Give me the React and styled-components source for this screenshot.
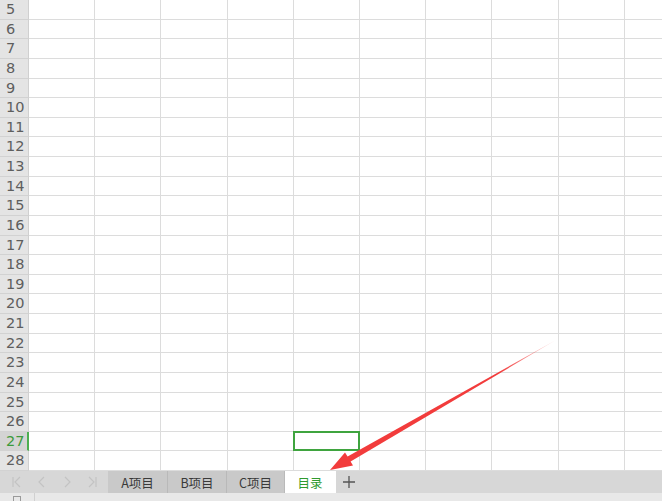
import React from 'react';
import styled, { createGlobalStyle } from 'styled-components';

const GlobalStyle = createGlobalStyle`
  html, body {
    margin: 0;
    padding: 0;
    overflow: hidden;
    background: #ffffff;
  }
`;

const Page = styled.div`
  position: relative;
  width: 662px;
  height: 501px;
  display: flex;
  flex-direction: column;
  font-family: "Noto Sans CJK SC", "Liberation Sans", sans-serif;
  overflow: hidden;
`;

const Sheet = styled.div`
  height: 471px;
  display: grid;
  grid-template-columns: 29px repeat(10, 66.2px);
  grid-template-rows: repeat(24, 1fr);
  overflow: hidden;
`;

const RowHead = styled.div`
  background: ${p => (p.$active ? '#d4d4d4' : '#e4e4e4')};
  color: ${p => (p.$active ? '#3c9a3c' : '#5e5e5e')};
  border-bottom: 1px solid #d2d2d2;
  border-right: ${p => (p.$active ? '2px solid #4caf50' : '1px solid #d0d0d0')};
  font-family: "DejaVu Sans", sans-serif;
  font-size: 14.5px;
  display: flex;
  align-items: center;
  padding-left: 6px;
  box-sizing: border-box;
  line-height: 1;
`;

const Cell = styled.div`
  position: relative;
  border-right: 1px solid #dcdcdc;
  border-bottom: 1px solid #dcdcdc;
  box-sizing: border-box;
  background: #fff;

  ${p => p.$selected && `
    &::after {
      content: '';
      position: absolute;
      inset: -1px -1px -1px -1px;
      border: 2px solid #3fa43f;
    }
  `}
`;

const TabBar = styled.div`
  height: 22px;
  background: #d7d7d7;
  display: flex;
  align-items: stretch;
`;

const Nav = styled.div`
  width: 108px;
  display: flex;
  align-items: center;
  justify-content: space-around;
  padding: 0 4px;
  box-sizing: border-box;
`;

const Tab = styled.div`
  width: ${p => p.$w}px;
  background: ${p => (p.$active ? '#ffffff' : '#c9c9c9')};
  color: ${p => (p.$active ? '#2f9a2f' : '#3a3a3a')};
  border-right: 1px solid ${p => (p.$active ? '#ffffff' : '#b9b9b9')};
  font-size: 12.5px;
  display: flex;
  align-items: center;
  justify-content: center;
  box-sizing: border-box;
`;

const AddTab = styled.div`
  width: 26px;
  display: flex;
  align-items: center;
  justify-content: center;
`;

const StatusBand = styled.div`
  height: 8px;
  background: #e8e8e8;
  display: flex;
`;

const StatusIcon = styled.div`
  width: 35px;
  border-right: 1px solid #d0d0d0;
  box-sizing: border-box;
  display: flex;
  justify-content: center;
  padding-top: 3px;

  &::before {
    content: '';
    width: 8px;
    height: 5px;
    border: 1px solid #9a9a9a;
    border-bottom: none;
    box-sizing: border-box;
  }
`;

const Overlay = styled.svg`
  position: absolute;
  left: 0;
  top: 0;
  pointer-events: none;
`;

const NavIcon = ({ d }) => (
  <svg width="12" height="14" viewBox="0 0 12 14">
    <path d={d} fill="none" stroke="#c3c3c3" strokeWidth="1.2" />
  </svg>
);

const rows = Array.from({ length: 24 }, (_, i) => i + 5);
const cols = Array.from({ length: 10 }, (_, i) => i);

const tabs = [
  { name: 'A项目', w: 60 },
  { name: 'B项目', w: 59 },
  { name: 'C项目', w: 58 },
  { name: '目录', w: 51, active: true },
];

export default function App() {
  return (
    <>
      <GlobalStyle />
      <Page>
        <Sheet>
          {rows.map(r => (
            <React.Fragment key={r}>
              <RowHead $active={r === 27}>{r}</RowHead>
              {cols.map(c => (
                <Cell key={c} $selected={r === 27 && c === 4} />
              ))}
            </React.Fragment>
          ))}
        </Sheet>
        <TabBar>
          <Nav>
            <NavIcon d="M2 2v10M9 2L4 7l5 5" />
            <NavIcon d="M8 2L3 7l5 5" />
            <NavIcon d="M4 2l5 5-5 5" />
            <NavIcon d="M3 2l5 5-5 5M10 2v10" />
          </Nav>
          {tabs.map(t => (
            <Tab key={t.name} $w={t.w} $active={t.active}>{t.name}</Tab>
          ))}
          <AddTab>
            <svg width="12" height="12" viewBox="0 0 12 12">
              <path d="M6 0v12M0 6h12" stroke="#555" strokeWidth="1.3" />
            </svg>
          </AddTab>
        </TabBar>
        <StatusBand>
          <StatusIcon />
        </StatusBand>
        <Overlay width="662" height="501">
          <defs>
            <linearGradient id="fade" x1="556" y1="340" x2="330" y2="470" gradientUnits="userSpaceOnUse">
              <stop offset="0" stopColor="#f23c3c" stopOpacity="0.15" />
              <stop offset="0.25" stopColor="#f23c3c" stopOpacity="1" />
              <stop offset="1" stopColor="#f23c3c" stopOpacity="1" />
            </linearGradient>
          </defs>
          <polygon
            points="330,470 353,465.5 350.6,461.4 556,340 347.6,456.6 345,452.4"
            fill="url(#fade)"
          />
        </Overlay>
      </Page>
    </>
  );
}
